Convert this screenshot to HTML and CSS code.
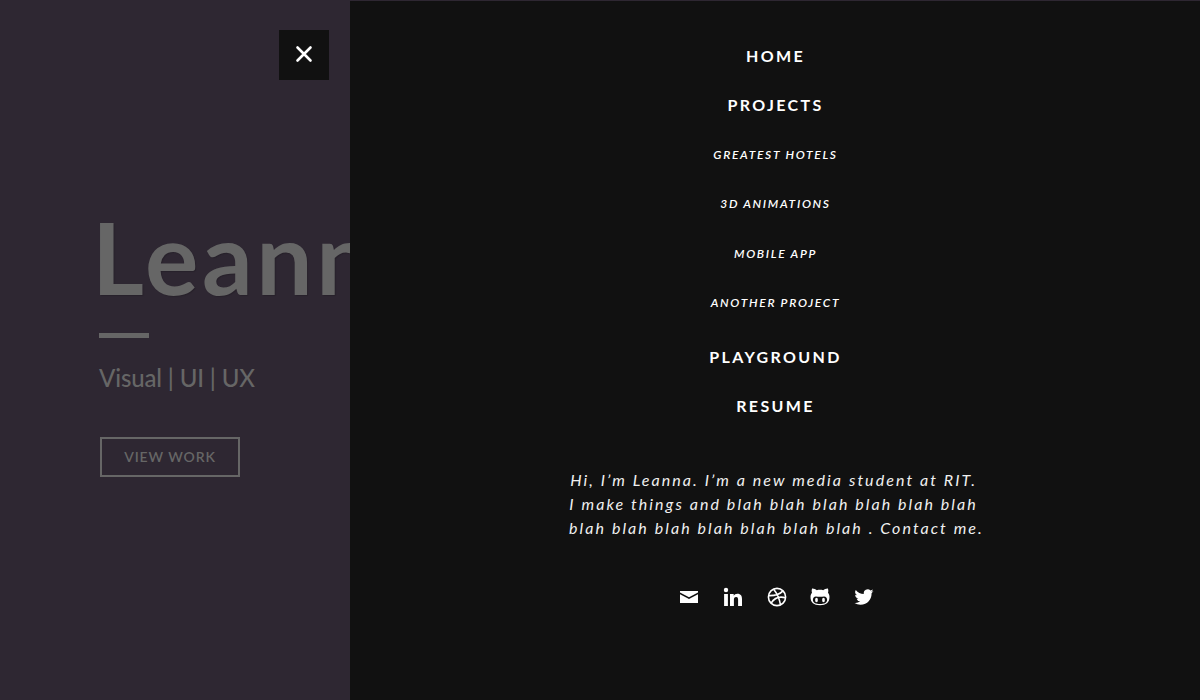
FILE: index.html
```html
<!DOCTYPE html>
<html lang="en">
<head>
<meta charset="utf-8">
<title>Leanna</title>
<link rel="stylesheet" href="styles.css">
</head>
<body>
<div class="page">
  <main class="hero">
    <button class="close" aria-label="Close menu">
      <svg width="18" height="18" viewBox="0 0 18 18"><path d="M2.500 2.500l13 13M15.500 2.500l-13 13" fill="none" stroke="#fff" stroke-width="2.600" stroke-linecap="round"/></svg>
    </button>
    <h1 class="title">Leanna</h1>
    <div class="rule"></div>
    <p class="tagline">Visual | UI | UX</p>
    <a class="button">VIEW WORK</a>
  </main>
  <aside class="menu">
    <nav class="nav">
      <a class="link">HOME</a>
      <a class="link">PROJECTS</a>
      <a class="sublink">GREATEST HOTELS</a>
      <a class="sublink">3D ANIMATIONS</a>
      <a class="sublink">MOBILE APP</a>
      <a class="sublink sublink-last">ANOTHER PROJECT</a>
      <a class="link">PLAYGROUND</a>
      <a class="link">RESUME</a>
    </nav>
    <p class="bio">Hi, I’m Leanna. I’m a new media student at RIT.&nbsp;<br>I make things and blah blah blah blah blah blah&nbsp;<br>blah blah blah blah blah blah blah . Contact me.</p>
    <div class="social">
      <svg class="icon" viewBox="0 0 20 20"><path d="M1 4h18v1.400l-9 4.800-9-4.800zM1 7.200l9 4.800 9-4.800V16H1z"/></svg>
      <svg class="icon" viewBox="0 0 20 20"><circle cx="3" cy="3" r="2.200"/><path d="M1.100 7h3.800v12H1.100zM7 7h3.700v1.700C11.400 7.500 12.600 6.700 14.300 6.700c3.700 0 4.700 2.300 4.700 5.500V19h-3.900v-6.200c0-1.600-.3-2.900-2-2.900s-2.200 1.200-2.200 2.800V19H7z"/></svg>
      <svg class="icon icon-line" viewBox="0 0 20 20"><circle cx="10" cy="10" r="8.600"/><path d="M6.600 2.300C9.500 5.700 12.200 10.600 13.500 17.900M1.600 8.600c5.400.2 10.600-.8 14.200-4.500M4.100 16.100c3.200-5.100 8.400-7 14.400-5.300"/></svg>
      <svg class="icon" viewBox="0 0 20 20"><path fill-rule="evenodd" d="M2.100 1.500c1.500-.2 3.300.7 4.700 1.700 2-.5 4.400-.5 6.400 0 1.400-1 3.200-1.900 4.700-1.700.6 1.600.5 3.200.1 4.200 1.100 1.200 1.500 2.600 1.500 4.300 0 5.700-3.400 8.200-9.500 8.200S.5 15.700.5 10c0-1.700.4-3.100 1.500-4.300-.4-1-.5-2.600.1-4.200zM6 9.500c-2.100 0-3.100 1.400-3.100 3.300 0 3.400 3.200 4.200 7.100 4.200s7.100-.8 7.100-4.200c0-1.900-1-3.300-3.100-3.300-1.300 0-2.500.3-4 .3s-2.700-.3-4-.3z"/><ellipse cx="6.500" cy="13" rx="1.400" ry="2.200"/><ellipse cx="13.500" cy="13" rx="1.400" ry="2.200"/></svg>
      <svg class="icon" viewBox="-.6 -.6 25.200 25.200"><path d="M23.950 4.570a10 10 0 0 1-2.820.77 4.960 4.960 0 0 0 2.160-2.720 9.900 9.900 0 0 1-3.120 1.190 4.920 4.920 0 0 0-8.380 4.480A13.900 13.900 0 0 1 1.640 3.160a4.920 4.920 0 0 0 1.520 6.570 4.900 4.900 0 0 1-2.230-.61v.06a4.920 4.920 0 0 0 3.950 4.830 5 5 0 0 1-2.220.08 4.930 4.930 0 0 0 4.600 3.420A9.870 9.870 0 0 1 0 19.540a14 14 0 0 0 7.550 2.210c9.060 0 14-7.500 14-13.980l-.02-.64a10 10 0 0 0 2.420-2.560z"/></svg>
    </div>
  </aside>
</div>
</body>
</html>
```

FILE: styles.css
```css
* { box-sizing: border-box; }
body { margin: 0; background: #2e2732; font-family: Lato, sans-serif; }
.page { display: flex; height: 700px; overflow: hidden; }
.hero { width: 350px; flex: none; overflow: hidden; padding: 30px 0 0 99px; color: #666; }
.close { display: flex; align-items: center; justify-content: center; width: 50px; height: 50px; margin-left: 180px; padding: 0; border: 0; background: #111; }
.close svg { position: relative; top: -1px; }
.title { margin: 116px 0 0 -7px; font-size: 100px; line-height: 120px; font-weight: 700; letter-spacing: 3.6px; text-shadow: 1px 1px 1px rgba(0,0,0,.15); }
.rule { width: 50px; height: 5px; margin-top: 17px; background: #666; }
.tagline { margin: 25px 0 0; font-size: 24px; line-height: 30px; font-weight: 500; letter-spacing: -.14px; }
.button { display: flex; align-items: center; justify-content: center; width: 140px; height: 40px; margin: 44px 0 0 1px; padding-bottom: 2px; border: 2px solid #666; font-size: 14px; font-weight: 600; letter-spacing: .9px; }
.menu { flex: 1; margin-top: 1px; padding-top: 30px; background: #111; color: #fff; text-align: center; }
.nav { display: flex; flex-direction: column; padding-left: 1px; }
.link { height: 49px; font-size: 16px; line-height: 49px; font-weight: 700; letter-spacing: 2.35px; }
.sublink { height: 49.4px; font-size: 12px; line-height: 51px; font-weight: 600; font-style: italic; letter-spacing: 1.7px; }
.sublink-last { margin-bottom: 5px; }
.bio { margin: 38px 0 0; padding-left: 3px; color: #f0f0f0; font-size: 16px; line-height: 24px; font-style: italic; letter-spacing: 2.07px; }
.social { display: flex; justify-content: center; gap: 23.75px; margin-top: 47px; padding-left: 3px; }
.icon { width: 20px; height: 20px; fill: #fff; }
.icon-line { fill: none; stroke: #fff; stroke-width: 1.6; }
```
